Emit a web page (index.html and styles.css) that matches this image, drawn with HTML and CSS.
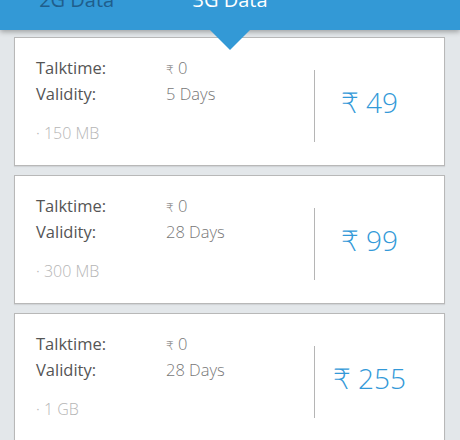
FILE: index.html
```html
<!DOCTYPE html>
<html lang="en">
<head>
    <meta charset="UTF-8">
    <title>Data Packs</title>
    <link rel="stylesheet" href="styles.css">
</head>
<body>
    <div id="tabs">
        <div class="tab">2G Data</div>
        <div class="tab active">3G Data</div>
        <div class="tab"></div>
    </div>
    <div id="packs">
        <div class="pack">
            <div class="info">
                <div class="row"><span class="label">Talktime:</span><span class="value"><span class="rs">₹</span> 0</span></div>
                <div class="row"><span class="label">Validity:</span><span class="value">5 Days</span></div>
                <div class="data">· 150 MB</div>
            </div>
            <div class="price">₹ 49</div>
        </div>
        <div class="pack">
            <div class="info">
                <div class="row"><span class="label">Talktime:</span><span class="value"><span class="rs">₹</span> 0</span></div>
                <div class="row"><span class="label">Validity:</span><span class="value">28 Days</span></div>
                <div class="data">· 300 MB</div>
            </div>
            <div class="price">₹ 99</div>
        </div>
        <div class="pack">
            <div class="info">
                <div class="row"><span class="label">Talktime:</span><span class="value"><span class="rs">₹</span> 0</span></div>
                <div class="row"><span class="label">Validity:</span><span class="value">28 Days</span></div>
                <div class="data">· 1 GB</div>
            </div>
            <div class="price">₹ 255</div>
        </div>
    </div>
</body>
</html>
```

FILE: styles.css
```css
body {
    margin: 0;
    background-color: #e3e7ea;
    font-family: "Open Sans", "DejaVu Sans", sans-serif;
    height: 440px;
    overflow: hidden;
}
#tabs {
    position: relative;
    z-index: 2;
    display: grid;
    grid-template-columns: repeat(3, 1fr);
    align-items: start;
    height: 30px;
    background-color: #3399d6;
    box-shadow: 0 2px 5px rgba(0,0,0,0.3);
}
/* pointer under the selected tab */
#tabs::after {
    content: "";
    position: absolute;
    left: 50%;
    top: 30px;
    margin-left: -20px;
    border-left: 20px solid transparent;
    border-right: 20px solid transparent;
    border-top: 20px solid #3399d6;
}
.tab {
    margin-top: -10px;
    text-align: center;
    font-size: 20px;
    line-height: 20px;
    color: #1f5e8c;
}
.tab.active {
    color: #fff;
}
#packs {
    display: flex;
    flex-direction: column;
    gap: 9px;
    padding: 7px 15px 0 14px;
}
.pack {
    display: flex;
    align-items: flex-start;
    background-color: #fff;
    border: 1px solid #b8b8b8;
    box-shadow: 0 1px 1px rgba(0,0,0,0.08);
}
.info {
    flex: 1;
    padding: 17px 0 22px 21px;
}
.row {
    display: flex;
    height: 26px;
    font-size: 16.5px;
    line-height: 26px;
}
.label {
    width: 130px;
    color: #555;
}
.value {
    color: #777;
    font-weight: 300;
}
.rs {
    font-size: 12px;
}
.data {
    height: 20px;
    margin-top: 16px;
    font-size: 16px;
    line-height: 20px;
    color: #b5b5b5;
    font-weight: 300;
}
.price {
    display: flex;
    align-items: center;
    justify-content: center;
    width: 109px;
    height: 64px;
    margin: 32px 20px 0 0;
    padding-bottom: 8px;
    border-left: 1px solid #b5b5b5;
    font-size: 28px;
    font-weight: 300;
    color: #3399d8;
}
```
